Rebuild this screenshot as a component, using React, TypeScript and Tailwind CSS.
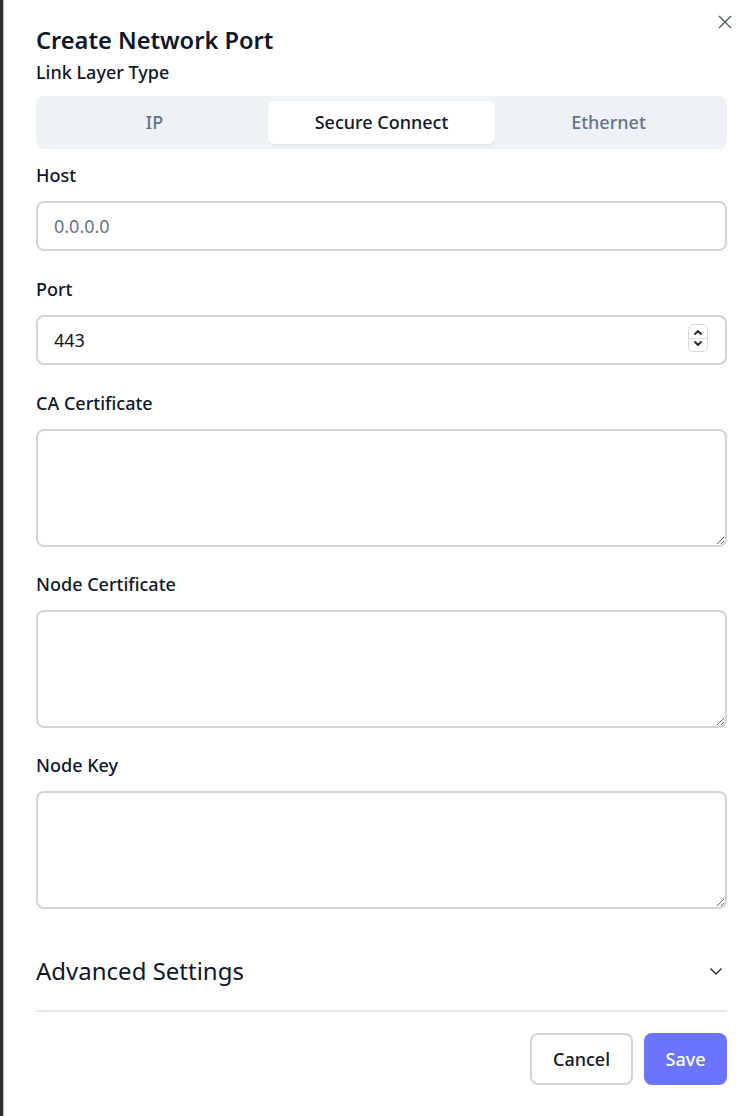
import React, { useState } from 'react';

type LinkType = 'IP' | 'SECURE' | 'ETHERNET';

const tabs: { id: LinkType; label: string }[] = [
  { id: 'IP', label: 'IP' },
  { id: 'SECURE', label: 'Secure Connect' },
  { id: 'ETHERNET', label: 'Ethernet' },
];

const Label: React.FC<{ children: React.ReactNode }> = ({ children }) => (
  <label className="block text-[18px] leading-6 font-medium text-[#0f172a]">{children}</label>
);

const App: React.FC = () => {
  const [linkType, setLinkType] = useState<LinkType>('SECURE');
  const [port, setPort] = useState('443');

  return (
    <div className="w-[748px] h-[1116px] flex bg-white" style={{ fontFamily: '"Noto Sans", "Open Sans", sans-serif' }}>
      {/* backdrop sliver on the left */}
      <div className="w-[3px] bg-[#2e2e33]" />
      <div className="relative flex-1 border-l border-[#bdbdc2] bg-white pl-8 pr-[21px] pt-[25px]">
        <button className="absolute right-[14px] top-[13px] p-0.5 text-[#4b5563]">
          <svg width="14" height="14" viewBox="0 0 14 14" fill="none" stroke="currentColor" strokeWidth="1.3">
            <path d="M1 1 L13 13 M13 1 L1 13" />
          </svg>
        </button>

        <h2 className="text-[23.6px] leading-[30px] font-semibold text-[#0f172a]">Create Network Port</h2>
        <p className="mt-[5px] text-[18px] leading-6 font-medium text-[#0f172a]">Link Layer Type</p>

        <div className="mt-3 h-[53px] rounded-lg bg-[#eef2f7] p-[5px] grid grid-cols-3">
          {tabs.map(t => (
            <button
              key={t.id}
              onClick={() => setLinkType(t.id)}
              className={
                linkType === t.id
                  ? 'rounded-md bg-white text-[18px] font-medium text-[#0f172a] shadow-[0_1px_2px_rgba(15,23,42,0.06)]'
                  : 'rounded-md text-[18px] font-medium text-[#64748b]'
              }
            >
              {t.label}
            </button>
          ))}
        </div>

        <div className="mt-[14px]">
          <Label>Host</Label>
          <input
            placeholder="0.0.0.0"
            className="mt-[14px] block w-full h-[50px] rounded-lg border-2 border-[#d4d4d4] px-4 text-[18px] text-[#0f172a] placeholder:text-[#64748b] outline-none"
          />
        </div>

        <div className="mt-[26px]">
          <Label>Port</Label>
          <div className="relative mt-[14px]">
            <input
              value={port}
              onChange={e => setPort(e.target.value)}
              className="block w-full h-[50px] rounded-lg border-2 border-[#d4d4d4] px-4 text-[18px] text-[#0f172a] outline-none"
            />
            <div className="absolute right-[19px] top-[9px] w-[20px] h-[28px] rounded-[5px] border border-[#dcdcdc] bg-white flex flex-col items-center justify-center">
              <svg width="10" height="22" viewBox="0 0 10 22" fill="none" stroke="#1f2937" strokeWidth="1.8" strokeLinecap="round" strokeLinejoin="round">
                <path d="M2 7 L5 4 L8 7" />
                <path d="M2 15 L5 18 L8 15" />
              </svg>
            </div>
            <div className="absolute right-[20px] top-[23px] w-[18px] h-px bg-[#e2e2e2]" />
          </div>
        </div>

        {['CA Certificate', 'Node Certificate', 'Node Key'].map((name, i) => (
          <div key={name} className={i === 0 ? 'mt-[26px]' : 'mt-[25px]'}>
            <Label>{name}</Label>
            <textarea className="mt-[14px] block w-full h-[118px] rounded-lg border-2 border-[#d4d4d4] px-4 py-3 text-[18px] outline-none" />
          </div>
        ))}

        <button className="mt-[46px] w-full flex items-center justify-between pb-[23px] border-b-2 border-[#e2e8f0]">
          <span className="text-[24px] leading-8 text-[#0f172a]">Advanced Settings</span>
          <svg className="mr-[4px]" width="14" height="10" viewBox="0 0 14 10" fill="none" stroke="#1e293b" strokeWidth="1.4">
            <path d="M1.5 2.5 L7 8 L12.5 2.5" />
          </svg>
        </button>

        <div className="mt-[21px] flex justify-end gap-[11px]">
          <button className="h-[52px] w-[103px] rounded-lg border-2 border-[#d4d4d4] bg-white text-[18px] font-medium text-[#0f172a]">
            Cancel
          </button>
          <button className="h-[52px] w-[83px] rounded-lg bg-[#6b74ff] text-[18px] font-medium text-white">
            Save
          </button>
        </div>
      </div>
    </div>
  );
};

export default App;
